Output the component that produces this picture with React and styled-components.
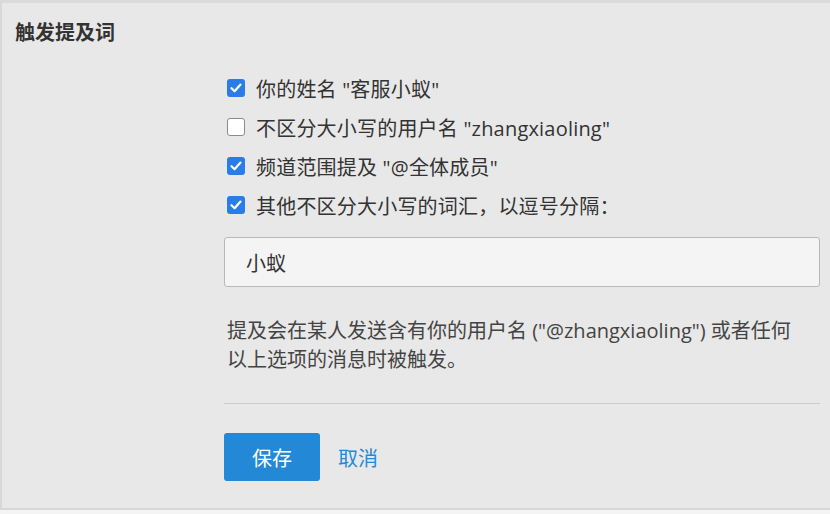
import React, { useState } from 'react';
import styled, { createGlobalStyle } from 'styled-components';

const GlobalStyle = createGlobalStyle`
  body {
    margin: 0;
    background: #f4f4f4;
    font-family: "Open Sans", "Noto Sans CJK SC", sans-serif;
    color: #333;
  }
`;

const Panel = styled.section`
  width: 830px;
  height: 510px;
  box-sizing: border-box;
  background: #e8e8e8;
  border-top: 3px solid #dadada;
  border-left: 2px solid #d8d8d8;
  border-bottom: 2px solid #d8d8d8;
`;

const Title = styled.h3`
  margin: 0;
  padding: 18px 0 0 13px;
  font-size: 20px;
  font-weight: 600;
  line-height: 24px;
  color: #333;
`;

const Body = styled.div`
  padding: 31px 10px 0 222px;
  display: flex;
  flex-direction: column;
`;

const Options = styled.div`
  display: flex;
  flex-direction: column;
  gap: 15px;
`;

const Row = styled.label`
  display: flex;
  align-items: center;
  gap: 11px;
  height: 24px;
  font-size: 20px;
  letter-spacing: 0.2px;
  color: #333;
  cursor: pointer;
`;

const Box = styled.span`
  width: 18px;
  height: 18px;
  margin-left: 3px;
  box-sizing: border-box;
  border-radius: 3px;
  display: flex;
  align-items: center;
  justify-content: center;
  background: ${(p) => (p.checked ? '#2a7ce8' : '#fff')};
  border: ${(p) => (p.checked ? 'none' : '1px solid #8a8a8a')};
`;

const TextInput = styled.input`
  margin-top: 20px;
  height: 50px;
  box-sizing: border-box;
  border: 1px solid #b8b8b8;
  border-radius: 3px;
  background: #f4f4f4;
  padding: 0 21px;
  font-family: inherit;
  font-size: 20px;
  color: #333;
  outline: none;
`;

const Help = styled.p`
  margin: 29px 0 0 3px;
  padding-right: 20px;
  font-size: 20px;
  line-height: 29px;
  color: #444;
`;

const Divider = styled.hr`
  margin: 29px 0 0;
  border: none;
  border-top: 1px solid #cbcbcb;
`;

const Actions = styled.div`
  display: flex;
  align-items: center;
  gap: 18px;
  margin-top: 29px;
`;

const SaveButton = styled.button`
  width: 96px;
  height: 48px;
  border: none;
  border-radius: 3px;
  background: #2389d7;
  color: #fff;
  font-family: inherit;
  font-size: 20px;
  cursor: pointer;
`;

const CancelLink = styled.a`
  color: #2389d7;
  font-size: 20px;
  cursor: pointer;
`;

const Check = () => (
  <svg width="12" height="10" viewBox="0 0 12 10">
    <path d="M1.5 5.2 L4.6 8.2 L10.5 1.6" fill="none" stroke="#fff" strokeWidth="2.2" strokeLinecap="round" strokeLinejoin="round" />
  </svg>
);

const options = [
  { label: '你的姓名 "客服小蚁"', checked: true },
  { label: '不区分大小写的用户名 "zhangxiaoling"', checked: false },
  { label: '频道范围提及 "@全体成员"', checked: true },
  { label: '其他不区分大小写的词汇，以逗号分隔：', checked: true },
];

const App = () => {
  const [checks, setChecks] = useState(options.map((o) => o.checked));
  const [words, setWords] = useState('小蚁');

  const toggle = (i) => {
    setChecks((prev) => prev.map((c, j) => (j === i ? !c : c)));
  };

  return (
    <>
      <GlobalStyle />
      <Panel>
        <Title>触发提及词</Title>
        <Body>
          <Options>
            {options.map((o, i) => (
              <Row key={o.label} onClick={() => toggle(i)}>
                <Box checked={checks[i]}>{checks[i] && <Check />}</Box>
                {o.label}
              </Row>
            ))}
          </Options>
          <TextInput value={words} onChange={(e) => setWords(e.target.value)} />
          <Help>
            提及会在某人发送含有你的用户名 ("@zhangxiaoling") 或者任何以上选项的消息时被触发。
          </Help>
          <Divider />
          <Actions>
            <SaveButton type="button">保存</SaveButton>
            <CancelLink>取消</CancelLink>
          </Actions>
        </Body>
      </Panel>
    </>
  );
};

export default App;
